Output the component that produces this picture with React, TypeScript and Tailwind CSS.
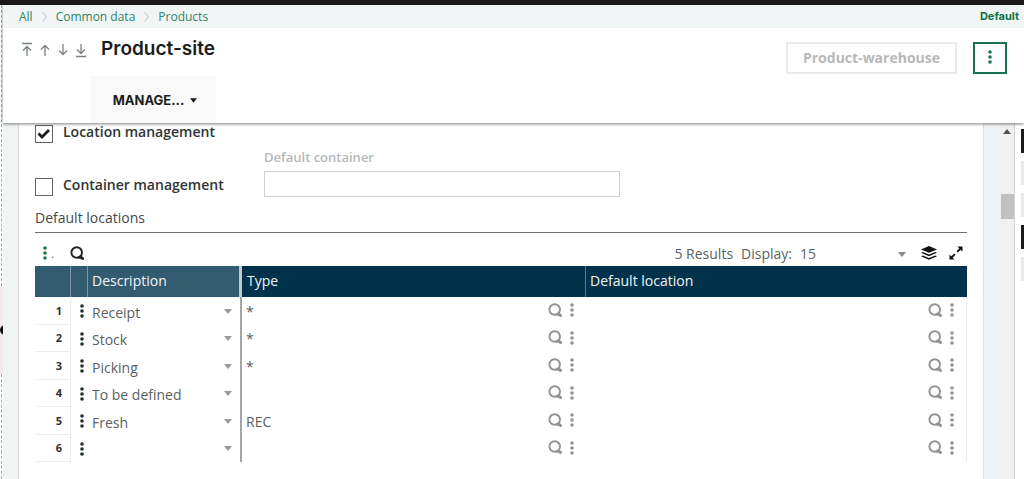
import type { ReactNode } from "react";
import clsx from "clsx";

interface LocationRow {
  description: string;
  type: string;
  location: string;
}

const rows: LocationRow[] = [
  { description: "Receipt", type: "*", location: "" },
  { description: "Stock", type: "*", location: "" },
  { description: "Picking", type: "*", location: "" },
  { description: "To be defined", type: "", location: "" },
  { description: "Fresh", type: "REC", location: "" },
  { description: "", type: "", location: "" },
];

const crumbs = ["All", "Common data", "Products"];

const arrows = [
  { label: "First", path: "M1 1.5h10M6 14V4.5M2 8.5l4-4 4 4" },
  { label: "Previous", path: "M6 14V3.5M2 7.5l4-4 4 4" },
  { label: "Next", path: "M6 2v10.5M2 8.5l4 4 4-4" },
  { label: "Last", path: "M1 14.5h10M6 2v9.5M2 7.5l4 4 4-4" },
];

function Dots({ className }: { className?: string }) {
  return (
    <svg viewBox="0 0 4 14" className={clsx("h-[14px] w-1", className)} fill="currentColor">
      <circle cx="2" cy="2" r="1.8" />
      <circle cx="2" cy="7" r="1.8" />
      <circle cx="2" cy="12" r="1.8" />
    </svg>
  );
}

function Caret({ className }: { className?: string }) {
  return (
    <svg viewBox="0 0 8 5" className={clsx("h-[5px] w-2", className)} fill="currentColor">
      <path d="M0 0h8L4 5z" />
    </svg>
  );
}

function Magnifier() {
  return (
    <svg viewBox="0 0 15 15" className="h-[15px] w-[15px]" fill="none" stroke="currentColor">
      <circle cx="6.7" cy="6.5" r="5.3" strokeWidth="1.9" />
      <path d="M9.2 11.2h1.6l1.8 1.2" strokeWidth="3" strokeLinecap="round" />
    </svg>
  );
}

function Layers() {
  return (
    <svg viewBox="0 0 16 14" className="h-[14px] w-4" fill="currentColor">
      <path d="M8 0l8 3.4-8 3.4-8-3.4z" />
      <path d="M1.8 5.9L8 8.5l6.2-2.6L16 6.7l-8 3.5-8-3.5z" />
      <path d="M1.8 9.4L8 12l6.2-2.6 1.8.8-8 3.5-8-3.5z" />
    </svg>
  );
}

function Expand() {
  return (
    <svg viewBox="0 0 14 14" className="h-[14px] w-[14px]" fill="currentColor" stroke="currentColor">
      <path d="M8.5.5h5v5zM.5 8.5v5h5z" stroke="none" />
      <path d="M8.2 5.8l3.3-3.3M5.8 8.2l-3.3 3.3" strokeWidth="1.8" />
    </svg>
  );
}

function Check({ id, checked, children }: { id: string; checked?: boolean; children: ReactNode }) {
  return (
    <div className="flex items-start">
      <span className="grid h-[18px] w-[18px] shrink-0">
        <input
          id={id}
          type="checkbox"
          defaultChecked={checked}
          className="peer col-start-1 row-start-1 h-[18px] w-[18px] appearance-none border border-[#5c6467] bg-white"
        />
        <svg
          viewBox="0 0 18 18"
          className="pointer-events-none invisible col-start-1 row-start-1 h-[18px] w-[18px] peer-checked:visible"
          fill="none"
          stroke="#1a1a1a"
          strokeWidth="2.8"
        >
          <path d="M3.5 8.5l3.5 3.5 7-7" />
        </svg>
      </span>
      <label htmlFor={id} className="-mt-[3px] ml-[10px] text-sm leading-5 font-semibold whitespace-nowrap text-[#303436]">
        {children}
      </label>
    </div>
  );
}

function LookupCell({ label, value }: { label: string; value: string }) {
  return (
    <div className="flex items-center pr-3">
      <input
        aria-label={label}
        defaultValue={value}
        className="h-6 w-full min-w-0 flex-1 bg-transparent pl-1 text-sm text-[#5a5f62] outline-none"
      />
      <button aria-label={`Look up ${label}`} className="mr-[7px] pb-[2px] text-[#939393]">
        <Magnifier />
      </button>
      <button aria-label={`${label} actions`} className="pb-[2px] text-[#939393]">
        <Dots />
      </button>
    </div>
  );
}

function Header() {
  return (
    <header className="relative z-10 shadow-[0_1px_3px_rgba(0,0,0,0.5)]">
      <nav aria-label="Breadcrumb" className="flex h-[23px] items-center justify-between bg-[#f1f5f6] pr-[5px] pl-4">
        <ol className="flex items-center text-xs text-[#2f8462]">
          {crumbs.map((crumb, i) => (
            <li key={crumb} className="flex items-center">
              {i > 0 && (
                <svg viewBox="0 0 5 10" className="mx-[9px] h-[10px] w-[5px]" fill="none" stroke="#b8bfc2">
                  <path d="M.5.5L4.5 5l-4 4.5" />
                </svg>
              )}
              <a href="#">{crumb}</a>
            </li>
          ))}
        </ol>
        <a href="#" className="font-[Inter,sans-serif] text-[11px] font-bold text-[#0d7344]">
          Default
        </a>
      </nav>
      <div className="flex items-start bg-white pr-[17px] pl-[18px]">
        <div className="mt-[14px] flex w-[80px] gap-[6px] text-[#77837f]">
          {arrows.map((arrow) => (
            <button key={arrow.label} aria-label={arrow.label}>
              <svg viewBox="0 0 12 16" className="h-4 w-3" fill="none" stroke="currentColor" strokeWidth="1.3">
                <path d={arrow.path} />
              </svg>
            </button>
          ))}
        </div>
        <h1 className="mt-[9px] flex-1 font-[Inter,sans-serif] text-[19px] leading-6 font-semibold text-[#1c1c1c]">
          Product-site
        </h1>
        <button
          disabled
          className="mt-[14px] h-8 border-2 border-[#e9ebeb] px-[15px] text-sm font-bold whitespace-nowrap text-[#b8b8b8]"
        >
          Product-warehouse
        </button>
        <button
          aria-label="More actions"
          className="mt-[14px] ml-4 flex h-8 w-[34px] items-center justify-center border-2 border-[#187350] pb-[2px] text-[#187350]"
        >
          <Dots />
        </button>
      </div>
      <div className="bg-white pt-[2px] pl-[87px]">
        <button className="flex h-[47px] w-[126px] items-center justify-center gap-[6px] bg-[#f9f9f9] pt-[2px] pl-1 font-[Inter,sans-serif] text-[13px] font-bold text-[#1c1c1c]">
          MANAGE...
          <Caret className="h-1 w-[7px]" />
        </button>
      </div>
    </header>
  );
}

function LocationsTable() {
  return (
    <table className="w-full table-fixed border-separate border-spacing-0 text-sm">
      <colgroup>
        <col className="w-[36px]" />
        <col className="w-[17px]" />
        <col className="w-[154px]" />
        <col className="w-[344px]" />
        <col />
      </colgroup>
      <thead>
        <tr className="h-[31px] text-left text-[#f2f5f7]">
          <th aria-label="Row" className="border-r border-[#7f97a4] bg-[#335b70] p-0" />
          <th aria-label="Actions" className="border-r border-[#7f97a4] bg-[#335b70] p-0" />
          <th className="border-r-[3px] border-[#c3c8ca] bg-[#335b70] p-0 pb-[2px] pl-1 font-normal">Description</th>
          <th className="border-r border-[#60798a] bg-[#00324c] p-0 pb-[2px] pl-[5px] font-normal">Type</th>
          <th className="bg-[#00324c] p-0 pb-[2px] pl-1 font-normal">Default location</th>
        </tr>
      </thead>
      <tbody>
        {rows.map((row, i) => (
          <tr key={i} className="odd:h-7 even:h-[27px]">
            <th className="border-r border-b border-[#ececec] p-0 pr-2 text-right text-[11px] font-bold text-[#303030]">
              {i + 1}
            </th>
            <td className="p-0">
              <button aria-label={`Row ${i + 1} actions`} className="flex w-full justify-center pl-[5px] text-[#203028]">
                <Dots />
              </button>
            </td>
            <td className="border-r-2 border-[#a3a5a6] p-0">
              <div className="grid items-center">
                <select
                  aria-label="Description"
                  className="col-start-1 row-start-1 h-6 appearance-none bg-transparent pt-[3px] pl-1 text-[#5a5f62] outline-none"
                >
                  <option>{row.description}</option>
                </select>
                <Caret className="pointer-events-none col-start-1 row-start-1 mr-2 justify-self-end text-[#9a9a9a]" />
              </div>
            </td>
            <td className="p-0">
              <LookupCell label="Type" value={row.type} />
            </td>
            <td className="border-r border-[#ececec] p-0">
              <LookupCell label="Default location" value={row.location} />
            </td>
          </tr>
        ))}
      </tbody>
    </table>
  );
}

function SitePanel() {
  return (
    <main className="min-w-0 flex-1 border-x border-[#dcdfe0] bg-white px-4 pt-[2px] pb-4">
      <Check id="location-management" checked>
        Location management
      </Check>
      <div className="mt-1 flex items-end">
        <div className="w-[229px] shrink-0 pb-px">
          <Check id="container-management">Container management</Check>
        </div>
        <div className="w-[356px]">
          <label htmlFor="default-container" className="block pb-1 text-[13px] leading-5 font-semibold text-[#b5b8b9]">
            Default container
          </label>
          <input id="default-container" className="block h-[26px] w-full border border-[#ccd1d3] px-2 text-sm outline-none" />
        </div>
      </div>
      <section className="mt-[11px]">
        <h2 className="border-b border-[#6d7173] pb-1 text-sm leading-5 font-medium text-[#44484a]">Default locations</h2>
        <div className="flex h-[33px] items-end pr-1 pb-[2px] text-sm leading-5 text-[#5a5f62]">
          <button aria-label="Table actions" className="ml-2 flex items-end pb-1 text-[#187a45]">
            <Dots />
            <span className="ml-1 text-xs leading-3 text-[#777]">.</span>
          </button>
          <button aria-label="Search" className="ml-4 pb-[3px] text-[#222]">
            <Magnifier />
          </button>
          <span className="ml-auto">5 Results</span>
          <label htmlFor="page-size" className="ml-2">
            Display:
          </label>
          <div className="ml-2 grid w-[106px] items-center">
            <select id="page-size" className="col-start-1 row-start-1 h-5 appearance-none bg-transparent outline-none">
              <option>15</option>
            </select>
            <Caret className="pointer-events-none col-start-1 row-start-1 justify-self-end text-[#8a8a8a]" />
          </div>
          <button aria-label="Layers" className="ml-[15px] pb-1 text-[#111]">
            <Layers />
          </button>
          <button aria-label="Full screen" className="ml-3 pb-1 text-[#111]">
            <Expand />
          </button>
        </div>
        <LocationsTable />
      </section>
    </main>
  );
}

export default function App() {
  return (
    <div className="flex min-h-screen flex-col bg-white font-['Open_Sans','Noto_Sans',sans-serif]">
      <div className="h-[5px] bg-[#1b191a]" />
      <div className="flex flex-1">
        {/* collapsed side drawer */}
        <aside className="flex w-[3px] shrink-0 flex-col">
          <div className="ml-px h-[281px] w-px border-l border-dashed border-[#aaa]" />
          <div className="flex h-[88px] items-center overflow-hidden bg-[#f3e9ea]">
            <span className="h-[10px] w-[10px] shrink-0 rounded-full bg-[#111]" />
          </div>
          <div className="ml-px w-px flex-1 border-l border-dashed border-[#aaa]" />
        </aside>
        <div className="flex min-w-0 flex-1 flex-col">
          <Header />
          <div className="flex flex-1">
            <div className="w-[15px] shrink-0 bg-[#f1f4f5]" />
            <SitePanel />
            <div className="w-4 shrink-0 bg-[#eff3f5]" />
            <div className="flex w-[15px] shrink-0 flex-col items-center border-r border-[#d3d3d3] bg-[#f0f0f0]">
              <Caret className="mt-[6px] rotate-180 text-[#505050]" />
              <div className="mt-[60px] h-[25px] w-[13px] bg-[#c1c1c1]" />
            </div>
            <div className="flex w-[9px] shrink-0 flex-col gap-2 pt-[6px] pl-[6px]">
              <div className="h-6 bg-[#1b1b1b]" />
              <div className="h-6 bg-[#e8eaea]" />
              <div className="h-6 bg-[#e8eaea]" />
              <div className="h-6 bg-[#1b1b1b]" />
              <div className="h-6 bg-[#e8eaea]" />
            </div>
          </div>
        </div>
      </div>
    </div>
  );
}
